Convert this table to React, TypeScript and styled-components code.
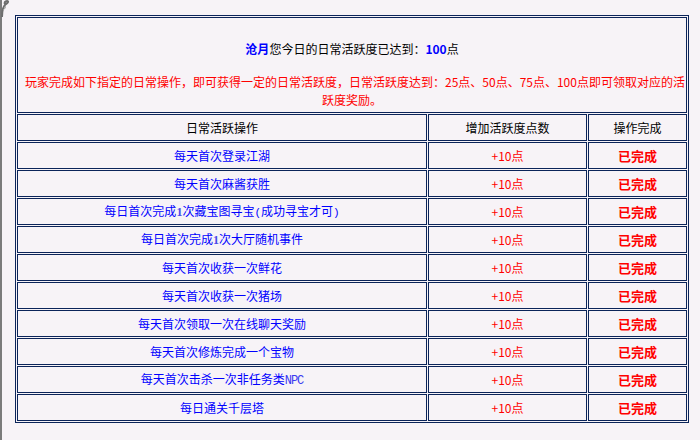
import React from "react";
import styled, { createGlobalStyle } from "styled-components";

const Global = createGlobalStyle`
  html, body { margin: 0; padding: 0; background: #f7f3f7; }
  body { font-family: "Noto Sans CJK SC", "Noto Sans", sans-serif; font-size: 12px; }
`;

const NAVY = "#0b2459";

const Page = styled.div`
  position: relative;
  display: flex;
  align-items: flex-start;
  width: 698px;
  min-height: 440px;
  border-left: 2px solid #7b7b7b;
  background: #f7f3f7;
  padding: 15px 0 0 13px;
  box-sizing: border-box;
`;

const Ornament = styled.svg`
  position: absolute;
  left: -2px;
  top: 0;
`;

const Table = styled.table`
  width: 674px;
  table-layout: fixed;
  border-collapse: separate;
  border-spacing: 1px;
  border: 1px solid ${NAVY};
`;

const Cell = styled.td<{ $tone?: "head" | "task" | "pts" | "done" }>`
  border: 1px solid ${NAVY};
  padding: 0;
  height: 25px;
  text-align: center;
  vertical-align: middle;
  line-height: 16px;
  white-space: nowrap;
  font-size: ${(p) => (p.$tone === "done" ? "13px" : "12px")};
  font-weight: ${(p) => (p.$tone === "done" ? 700 : 400)};
  color: ${(p) =>
    p.$tone === "task" ? "#0000ff" : p.$tone === "pts" || p.$tone === "done" ? "#ff0000" : "#000"};
`;

const IntroCell = styled.td`
  border: 1px solid ${NAVY};
  padding: 22px 7px 0;
  height: 72px;
  vertical-align: top;
  text-align: center;
`;

const Summary = styled.div`
  line-height: 18px;
  color: #000;
  white-space: nowrap;
`;

const Accent = styled.b`
  color: #0000ff;
`;

const Rules = styled.div`
  margin-top: 15px;
  line-height: 18px;
  color: #ff0000;
  white-space: nowrap;
`;

const Mono = styled.span`
  font-family: "Liberation Mono", monospace;
  font-size: 12px;
  letter-spacing: -1px;
  color: #3a3af0;
`;

const Paren = styled.span`
  font-family: "Liberation Mono", monospace;
  font-size: 11px;
`;

const One = styled.span`
  font-family: "Liberation Serif", serif;
  font-weight: 700;
  color: #4a4ae8;
`;

const tasks: React.ReactNode[] = [
  "每天首次登录江湖",
  "每天首次麻酱获胜",
  <>每日首次完成<One>1</One>次藏宝图寻宝<Paren>(</Paren>成功寻宝才可<Paren>)</Paren></>,
  <>每日首次完成<One>1</One>次大厅随机事件</>,
  "每天首次收获一次鲜花",
  "每天首次收获一次猪场",
  "每天首次领取一次在线聊天奖励",
  "每天首次修炼完成一个宝物",
  <>每天首次击杀一次非任务类<Mono>NPC</Mono></>,
  "每日通关千层塔",
];

export default function App() {
  return (
    <>
      <Global />
      <Page>
        <Ornament width="10" height="18" viewBox="0 0 10 18">
          <path d="M2 17 C2 10 3 6 6 4 C8 3 9 1 7 1 C5 1 4 3 5 4" fill="none" stroke="#6e6e6e" strokeWidth="2" />
          <path d="M3 10 C5 9 6 7 5 6" fill="none" stroke="#a0a0a0" strokeWidth="1" />
        </Ornament>
        <Table>
          <colgroup>
            <col style={{ width: 410 }} />
            <col style={{ width: 159 }} />
            <col style={{ width: 99 }} />
          </colgroup>
          <tbody>
            <tr>
              <IntroCell colSpan={3}>
                <Summary>
                  <Accent>沧月</Accent>您今日的日常活跃度已达到：<Accent>100</Accent>点
                </Summary>
                <Rules>
                  玩家完成如下指定的日常操作，即可获得一定的日常活跃度，日常活跃度达到：25点、50点、75点、100点即可领取对应的活
                  <br />
                  跃度奖励。
                </Rules>
              </IntroCell>
            </tr>
            <tr>
              <Cell $tone="head">日常活跃操作</Cell>
              <Cell $tone="head">增加活跃度点数</Cell>
              <Cell $tone="head">操作完成</Cell>
            </tr>
            {tasks.map((t, i) => (
              <tr key={i}>
                <Cell $tone="task">{t}</Cell>
                <Cell $tone="pts">+10点</Cell>
                <Cell $tone="done">已完成</Cell>
              </tr>
            ))}
          </tbody>
        </Table>
      </Page>
    </>
  );
}
